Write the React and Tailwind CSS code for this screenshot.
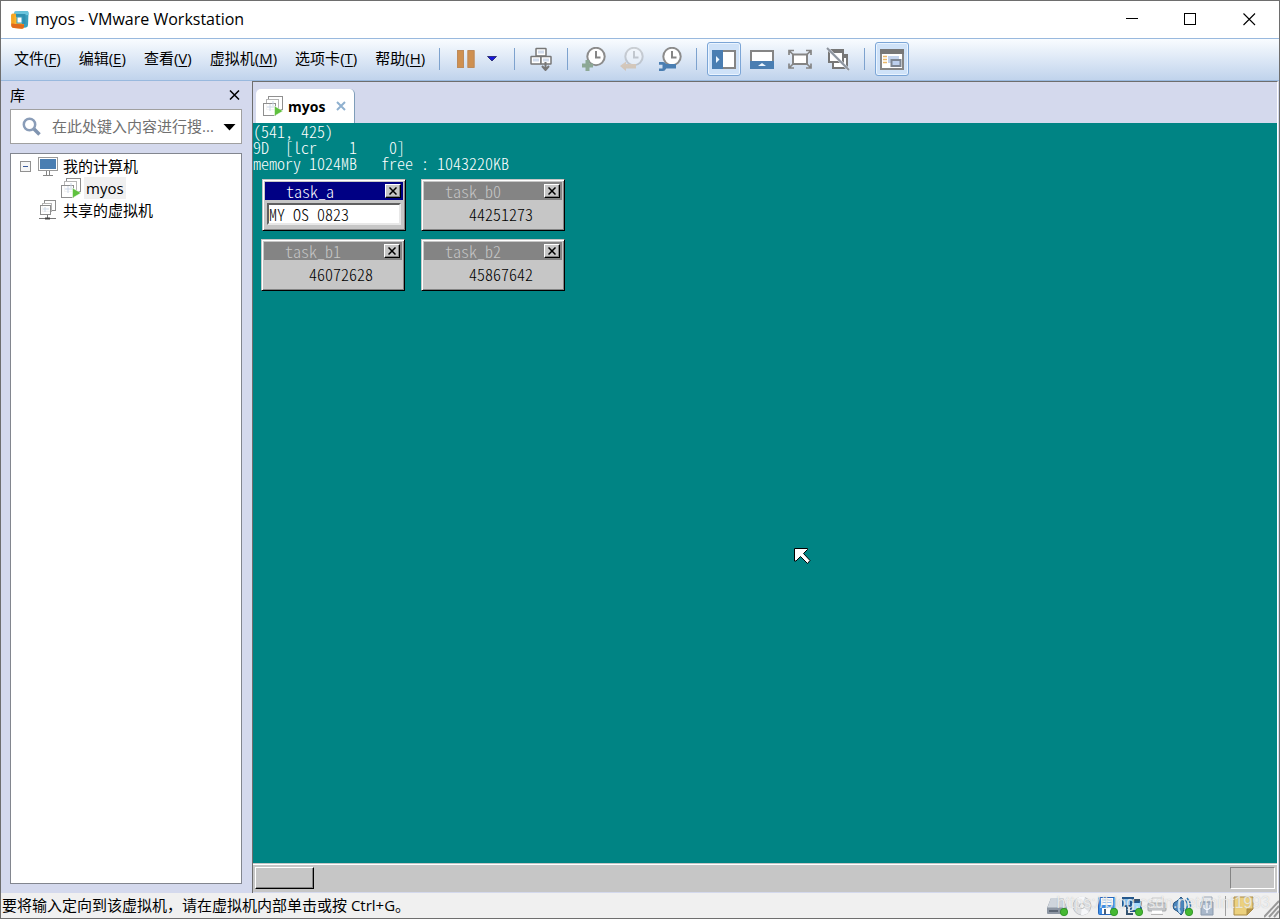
import React from "react";

const menus = [
  ["文件", "F"],
  ["编辑", "E"],
  ["查看", "V"],
  ["虚拟机", "M"],
  ["选项卡", "T"],
  ["帮助", "H"],
];

function Svg({ children, w = 24, h = 24, className = "" }) {
  return (
    <svg width={w} height={h} viewBox={`0 0 ${w} ${h}`} fill="none" aria-hidden="true" className={`block shrink-0 ${className}`}>
      {children}
    </svg>
  );
}

function Logo() {
  return (
    <Svg w={20} h={20}>
      <path d="M5 1.500 16.500 1Q18.500 1 18.500 3L18 15Q18 17 16 17.500L12 18V5L4 4z" fill="#3a9fbd" />
      <path d="M4.500 1.500 17 1Q18.500 1 18.500 3v2L4 6z" fill="#68c3dc" />
      <path d="M3 3.500 12.500 4.500Q14 4.500 14 6.500v10Q14 18.700 12 18.700L4 18Q1.500 18 1.200 16L1 5.500Q1 3.500 3 3.500z" fill="#f5a623" />
      <path d="M1.300 13.500 14 14.500v2Q14 18.700 12 18.700L4 18Q1.500 18 1.300 15z" fill="#e06a1c" />
      <path d="M4.500 5.500h10V14h-10z" fill="#f9b631" />
      <path d="M6 4h9.500v10H12V7H6z" fill="#2e8fb0" />
      <rect x="7" y="7" width="5" height="6" fill="#fff" stroke="#3a9fbd" />
    </Svg>
  );
}

function Clock({ faded, children }) {
  return (
    <Svg>
      <g opacity={faded ? 0.35 : 1}>
        <circle cx="14" cy="9.500" r="8.700" fill="#fff" stroke="#8c8c8c" strokeWidth="2" />
        <path d="M14 4v6.500h4.500" stroke="#858585" strokeWidth="2" />
        {children}
      </g>
    </Svg>
  );
}

function VmIcon({ running }) {
  return (
    <Svg w={20} h={20}>
      <rect x="5.500" y="0.500" width="14" height="13" fill="#fff" stroke="#8f8f8f" />
      <rect x="3.500" y="3.500" width="12" height="10" fill="#fff" stroke="#b5b5b5" />
      <rect x="0.500" y="7.500" width="12" height="12" fill="#fff" fillOpacity="0.850" stroke="#8f8f8f" />
      <path d="M7 8v7M4 11h9M10 5v5" stroke="#ccd7e6" />
      {running && <path d="M11.500 10v10l8.500-5z" fill="#5fc13e" stroke="#fff" strokeWidth="0.500" />}
    </Svg>
  );
}

function SharedIcon() {
  return (
    <Svg w={18} h={20}>
      <rect x="5.500" y="0.500" width="11" height="10" fill="#fff" stroke="#8f8f8f" />
      <rect x="3.500" y="3.500" width="9" height="8" fill="#fff" stroke="#b5b5b5" />
      <rect x="1.500" y="5.500" width="10" height="9" fill="#fff" fillOpacity="0.850" stroke="#8f8f8f" />
      <path d="M6 7v5M4 9h6" stroke="#ccd7e6" />
      <path d="M8.500 15v3M0 18.500h6M11 18.500h6" stroke="#777" />
      <path d="M6 18.500h5" stroke="#444" strokeWidth="2" />
    </Svg>
  );
}

function Separator({ className }) {
  return <span className={`h-[22px] w-px shrink-0 bg-[#7da2ce] ${className}`} />;
}

function ToolButton({ label, children, active, className = "" }) {
  return (
    <button
      aria-label={label}
      className={`flex size-[34px] shrink-0 items-center justify-center rounded-[3px] ${
        active ? "border border-[#7ba5d6] bg-[#cfe2f8] shadow-[inset_0_0_0_1px_#eaf4ff]" : ""
      } ${className}`}
    >
      {children}
    </button>
  );
}

function Toolbar() {
  return (
    <div className="flex h-[43px] shrink-0 items-center overflow-hidden border-y border-[#99b9de] bg-linear-to-b from-[#f9fcff] to-[#c0d3ec] pb-px pl-[13px]">
      <nav className="flex shrink-0 gap-[18px] pb-[2px] text-[15px] leading-5">
        {menus.map(([name, key]) => (
          <button key={key} className="whitespace-nowrap">
            {name}(<u className="underline-offset-2">{key}</u>)
          </button>
        ))}
      </nav>
      <Separator className="mx-[14px]" />
      <button aria-label="暂停">
        <Svg>
          <path d="M3 3h7v18H3zM13.500 3h7v18h-7z" fill="#cf9050" />
          <path d="M3.500 3.500h6v17h-6zM14 3.500h6v17h-6z" stroke="#bd8a5b" />
        </Svg>
      </button>
      <button aria-label="电源选项" className="ml-[6px]">
        <Svg w={16} h={24}>
          <path d="M3.500 9.500h9L8 14z" fill="#1717dd" stroke="#10104f" strokeWidth="0.700" />
        </Svg>
      </button>
      <Separator className="mx-[14px]" />
      <button aria-label="发送 Ctrl+Alt+Del">
        <Svg>
          <g fill="#fff" stroke="#777" strokeWidth="1.500">
            <rect x="7" y="1.500" width="10" height="7.500" rx="0.500" />
            <rect x="2" y="9.500" width="10" height="7.500" rx="0.500" />
            <rect x="12" y="9.500" width="10" height="7.500" rx="0.500" />
          </g>
          <path d="M9 5h6M4 13h6M14 13h6" stroke="#d1dced" strokeWidth="3" />
          <path d="M16.500 15v7M13 19l3.500 4 3.500-4" stroke="#777" strokeWidth="2" />
        </Svg>
      </button>
      <Separator className="mx-[14px]" />
      <div className="flex shrink-0 gap-[14px]">
        <button aria-label="拍摄快照">
          <Clock><path d="M3.500 13h4v3.500H11v4H7.500V24h-4v-3.500H0v-4h3.500z" fill="#8ca895" /></Clock>
        </button>
        <button aria-label="恢复快照" disabled>
          <Clock faded><path d="M0 19l6-4.500V17h10v4.500H6V24z" fill="#d39855" /></Clock>
        </button>
        <button aria-label="管理快照">
          <Clock>
            <path d="M1 15h4q2 0 3.200 2H18v4.500H8.200Q7 24 5 24H1v-2.500h3.500v-3.800H1z" fill="#4a7eb2" />
          </Clock>
        </button>
      </div>
      <Separator className="ml-[14px] mr-[10px]" />
      <div className="flex shrink-0 gap-1">
        <ToolButton label="显示库" active>
          <Svg>
            <rect x="1" y="4" width="22" height="17" fill="#fff" stroke="#858585" strokeWidth="2" />
            <path d="M0 3h11v19H0z" fill="#4a7eb2" />
            <path d="M4 9l3.500 3.500L4 16z" fill="#eef7ff" />
          </Svg>
        </ToolButton>
        <ToolButton label="显示缩略图">
          <Svg>
            <rect x="1" y="4" width="22" height="17" fill="#fff" stroke="#858585" strokeWidth="2" />
            <path d="M0 14h24v8H0z" fill="#4a7eb2" />
            <path d="M8 19l4-3 4 3z" fill="#eef7ff" />
          </Svg>
        </ToolButton>
        <ToolButton label="全屏">
          <Svg>
            <rect x="5" y="7.500" width="14" height="9.500" fill="#fff" stroke="#858585" strokeWidth="2" />
            <path d="M1 8V3.500h5M18 3.500h5V8M1 16.500V21h5M18 21h5v-4.500M1 3.500l4 4M23 3.500l-4 4M1 21l4-4M23 21l-4-4" stroke="#858585" strokeWidth="1.700" />
          </Svg>
        </ToolButton>
        <ToolButton label="Unity">
          <Svg>
            <rect x="7" y="8" width="14" height="13" fill="#fff" stroke="#777" strokeWidth="2" />
            <path d="M6 7h16v4H6z" fill="#777" />
            <rect x="3" y="3" width="14" height="12" fill="#fff" stroke="#777" strokeWidth="2" />
            <path d="M2 2h16v4H2z" fill="#777" />
            <path d="M1 1l22 22" stroke="#e8edf5" strokeWidth="3" />
            <path d="M1 1l22 22" stroke="#8d949d" strokeWidth="2" />
          </Svg>
        </ToolButton>
      </div>
      <Separator className="ml-[9px] mr-[10px]" />
      <ToolButton label="控制台视图" active>
        <Svg>
          <rect x="1" y="3" width="22" height="19" fill="#fff" stroke="#858585" strokeWidth="2" />
          <path d="M0 2h24v5H0z" fill="#777" />
          <path d="M3 9.500h4M3 12.500h4M3 15.500h4" stroke="#e9b769" strokeWidth="1.500" />
          <path d="M8 9h11v7H8z" fill="#c3d3ed" />
          <rect x="11.500" y="13" width="9" height="6" fill="#bdd0ee" stroke="#7c8592" strokeWidth="2" />
        </Svg>
      </ToolButton>
    </div>
  );
}

function Sidebar() {
  return (
    <aside className="flex w-[251px] shrink-0 flex-col bg-[#d4d9ed] pb-[9px] pl-[9px] pr-[10px]">
      <div className="flex h-7 items-center justify-between pr-[2px] text-[15px]">
        <h2>库</h2>
        <button aria-label="关闭库">
          <Svg w={11} h={10}>
            <path d="M1 0.500l9 9M10 0.500l-9 9" stroke="#000" strokeWidth="1.500" />
          </Svg>
        </button>
      </div>
      <div className="flex h-[35px] shrink-0 items-center border border-[#a0a0a0] bg-white pl-[11px] pr-[5px]">
        <Svg w={20} h={20}>
          <circle cx="7.500" cy="7.500" r="5.700" stroke="#8a9db8" strokeWidth="2.500" />
          <path d="M12 12l5.500 5.500" stroke="#8094b0" strokeWidth="3.500" />
        </Svg>
        <input
          aria-label="搜索"
          placeholder="在此处键入内容进行搜..."
          className="ml-[10px] min-w-0 flex-1 bg-transparent text-[15px] outline-none placeholder:text-[#707070]"
        />
        <button aria-label="搜索选项">
          <Svg w={13} h={8}>
            <path d="M0.500 1h12l-6 6.500z" fill="#000" />
          </Svg>
        </button>
      </div>
      <ul className="mt-[9px] flex-1 border border-[#82868f] bg-white pl-[9px] pt-px text-[15px] leading-[22px]">
        <li>
          <div className="flex h-[22px] items-center">
            <button aria-label="折叠">
              <Svg w={11} h={11}>
                <rect x="0.500" y="0.500" width="10" height="10" fill="#f6f6f6" stroke="#919191" />
                <path d="M3 5.500h5" stroke="#3a5a9b" />
              </Svg>
            </button>
            <Svg w={20} h={20} className="ml-[7px]">
              <rect x="0.500" y="1.500" width="19" height="13" fill="#4a7eb2" stroke="#9a9a9a" />
              <rect x="1.500" y="2.500" width="17" height="11" stroke="#fff" />
              <path d="M8.500 15v4M11.500 15v4M5 19.500h10" stroke="#858585" />
            </Svg>
            <span className="ml-[5px]">我的计算机</span>
          </div>
          <ul>
            <li className="flex h-[22px] items-center pl-[41px]">
              <VmIcon running />
              <span className="ml-[3px] bg-[#f0f0f0] px-[2px]">myos</span>
            </li>
          </ul>
        </li>
        <li className="flex h-[22px] items-center pl-[19px]">
          <SharedIcon />
          <span className="ml-[6px]">共享的虚拟机</span>
        </li>
      </ul>
    </aside>
  );
}

function GuestWindow({ title, active, className, children }) {
  return (
    <section
      className={`absolute h-[52px] w-36 border-b border-l border-r border-t border-b-black border-l-[#c6c6c6] border-r-black border-t-[#c6c6c6] bg-[#c6c6c6] shadow-[inset_1px_1px_0_#fff,inset_-1px_-1px_0_#848484] ${className}`}
    >
      <header
        className={`mx-[2px] mt-[2px] flex h-[18px] items-center justify-between pl-[21px] pr-[2px] ${
          active ? "bg-[#000084] text-white" : "bg-[#848484] text-[#c6c6c6]"
        }`}
      >
        <span className="leading-4">{title}</span>
        <button
          aria-label={`关闭 ${title}`}
          className="flex h-[14px] w-4 items-center justify-center border border-b-black border-l-white border-r-black border-t-white bg-[#c6c6c6] shadow-[inset_-1px_-1px_0_#848484]"
        >
          <Svg w={8} h={8}>
            <path d="M0.500 0.500l7 7M7.500 0.500l-7 7" stroke="#000" strokeWidth="1.500" />
          </Svg>
        </button>
      </header>
      {children}
    </section>
  );
}

function Counter({ value }) {
  return <p className="mt-[6px] pr-[31px] text-right leading-4 text-black">{value}</p>;
}

function Guest() {
  return (
    <div className="relative flex flex-1 flex-col bg-[#008484] font-['Noto_Sans_CJK_JP',monospace] text-base font-light leading-4 text-white [font-feature-settings:'hwid']">
      <div>
        <p className="flex"><span className="w-12">(541,</span><span>425)</span></p>
        <p className="flex"><span className="w-8">9D</span><span className="w-16">[lcr</span><span className="w-10">1</span><span>0]</span></p>
        <p className="flex"><span className="w-14">memory</span><span className="w-18">1024MB</span><span className="w-10">free</span><span className="w-4">:</span><span>1043220KB</span></p>
      </div>
      <GuestWindow title="task_a" active className="left-[9px] top-14">
        <input
          aria-label="task_a"
          defaultValue="MY OS 0823"
          className="mx-1 mt-[3px] block h-[22px] w-[134px] border-2 border-b-[#e8e8e8] border-l-[#606060] border-r-[#e8e8e8] border-t-[#606060] bg-white text-black outline-none [font-feature-settings:'hwid']"
        />
      </GuestWindow>
      <GuestWindow title="task_b0" className="left-[168px] top-14"><Counter value="44251273" /></GuestWindow>
      <GuestWindow title="task_b1" className="left-2 top-[116px]"><Counter value="46072628" /></GuestWindow>
      <GuestWindow title="task_b2" className="left-[168px] top-[116px]"><Counter value="45867642" /></GuestWindow>
      <Svg w={17} h={17} className="absolute left-[541px] top-[425px]">
        <path d="M0.500 0.500h13v1l-4 4 6.500 7-2.500 3-7-7-4.500 4.500H0.500z" fill="#fff" stroke="#000" />
      </Svg>
      <div className="mt-auto flex h-[29px] items-center justify-between border-t border-[#c6c6c6] bg-[#c6c6c6] px-[2px] shadow-[inset_0_1px_0_#fff]">
        <button aria-label="开始" className="h-[22px] w-[59px] border border-b-black border-l-white border-r-black border-t-white shadow-[inset_-1px_-1px_0_#848484]" />
        <div className="h-[22px] w-[45px] border border-b-white border-l-[#848484] border-r-white border-t-[#848484]" />
      </div>
    </div>
  );
}

const Dot = () => <circle cx="17" cy="17" r="3.700" fill="#45b832" stroke="#278d20" strokeWidth="0.800" />;

function StatusBar() {
  return (
    <footer className="relative flex h-[25px] shrink-0 items-center justify-between bg-[#f0f0f0] pl-px text-[15px]">
      <p className="whitespace-nowrap">要将输入定向到该虚拟机，请在虚拟机内部单击或按 Ctrl+G。</p>
      <div className="flex shrink-0 items-center gap-[4px]">
        <Svg w={21} h={22}>
          <path d="M4 3h12l4 10v5q0 1-1 1H1q-1 0-1-1v-5z" fill="#8d96a3" />
          <path d="M4 3h12l3.500 9.500H0.500z" fill="#cfd5dc" />
          <path d="M2 16h9" stroke="#5c6674" strokeWidth="2" />
          <Dot />
        </Svg>
        <Svg w={21} h={22}>
          <circle cx="10" cy="11" r="9" fill="#dfe1e4" stroke="#c3c5c9" />
          <path d="M10 11L4 4q5-4 9-2zM10 11l7 6q-4 4-8 3z" fill="#f6f7f9" />
          <circle cx="10" cy="11" r="2.500" fill="#fff" stroke="#bbb" />
        </Svg>
        <Svg w={21} h={22}>
          <rect x="1.500" y="2.500" width="17" height="17" rx="1" fill="#3e8fe6" stroke="#2767bc" />
          <path d="M4 3h12v7H4zM5 13h9v6H5z" fill="#fff" />
          <path d="M5 5h10M5 7.500h10" stroke="#9cc5f2" />
          <path d="M7 14h2v5H7z" fill="#4a5e78" />
          <Dot />
        </Svg>
        <Svg w={21} h={22}>
          <rect x="1" y="3" width="10" height="8" fill="#85c4f3" stroke="#24578c" strokeWidth="2" />
          <rect x="9" y="7" width="10" height="9" fill="#a7dbff" stroke="#24578c" strokeWidth="2" />
          <path d="M5 12v7h6M11 5h7" stroke="#34536f" strokeWidth="2" />
          <Dot />
        </Svg>
        <Svg w={21} h={22}>
          <path d="M5 3h11v6H5z" fill="#f5f5f5" stroke="#c9c9c9" />
          <rect x="1" y="8" width="18" height="8" rx="1" fill="#c3c5c8" stroke="#a5a8ab" />
          <path d="M4 12h12" stroke="#fff" strokeWidth="1" />
          <path d="M5 17h10" stroke="#fff" strokeWidth="3" />
          <path d="M4 19.500h12" stroke="#b6b6b6" />
        </Svg>
        <Svg w={21} h={22}>
          <path d="M1 11Q1 7 5 6l4-4q3 2 3 9t-3 9l-4-4Q1 15 1 11z" fill="#4a86bd" stroke="#2b5680" />
          <path d="M8 4q-3 7 0 14" stroke="#b9dcf8" strokeWidth="2" />
          <path d="M13 5q5 5 0 11M15 3q7 8 0 15" stroke="#2875b2" strokeWidth="1.500" />
          <Dot />
        </Svg>
        <Svg w={21} h={22}>
          <path d="M6 2h9v5H6z" fill="#e9edf2" stroke="#9da8b6" />
          <path d="M4 7h12v13H4z" fill="#a9b8ca" stroke="#8a9aad" />
          <path d="M10 18V8M7 10v3l3 2 3-2v-3" stroke="#f4f8ff" strokeWidth="1.300" />
        </Svg>
        <span className="mx-[3px] h-5 w-px bg-[#a0a0a0]" />
        <Svg w={21} h={22}>
          <path d="M1 2h19v12l-6 6H1z" fill="#ecd17e" stroke="#a98b46" />
          <path d="M14 20v-6h6z" fill="#b9984c" stroke="#a98b46" />
        </Svg>
        <Svg w={15} h={25} className="ml-[6px]">
          <path d="M0 24L15 8M5 24L15 13M10 24L15 18" stroke="#999" strokeWidth="2" />
        </Svg>
      </div>
      <span className="pointer-events-none absolute right-[9px] top-0 whitespace-nowrap font-['Liberation_Sans',sans-serif] text-base leading-5 text-white/70 [text-shadow:0_0_1px_#88888880]">
        https://blog.csdn.net/mint1993
      </span>
    </footer>
  );
}

export default function App() {
  return (
    <div className="flex min-h-screen flex-col border border-[#6e6e6e] bg-[#d4d9ed] font-['Open_Sans','Noto_Sans_CJK_SC',sans-serif] text-black">
      <header className="flex h-[37px] shrink-0 items-center bg-white pl-[9px]">
        <Logo />
        <h1 className="ml-[5px] flex-1 pb-px text-base">myos - VMware Workstation</h1>
        <button aria-label="最小化" className="flex h-full w-[58px] items-center justify-center">
          <Svg w={13} h={13}><path d="M0 5.500h12" stroke="#000" /></Svg>
        </button>
        <button aria-label="最大化" className="flex h-full w-[58px] items-center justify-center">
          <Svg w={13} h={13}><rect x="0.500" y="0.500" width="11" height="11" stroke="#000" /></Svg>
        </button>
        <button aria-label="关闭" className="flex h-full w-[60px] items-center justify-center">
          <Svg w={13} h={13}><path d="M0.500 0.500l11.500 11.500M12 0.500L0.500 12" stroke="#000" strokeWidth="1.100" /></Svg>
        </button>
      </header>
      <Toolbar />
      <div className="flex flex-1">
        <Sidebar />
        <main className="mr-px flex min-w-0 flex-1 flex-col border-l border-r border-t border-l-[#6e6e6e] border-r-white border-t-[#6e6e6e] pb-px">
          <div className="flex h-[41px] shrink-0 items-end pl-[3px]">
            <div className="flex h-[34px] items-center rounded-t-[5px] border-r border-[#7f9db9] bg-white pl-[7px] pr-2">
              <VmIcon running />
              <button className="ml-[5px] text-[14px] font-bold">myos</button>
              <button aria-label="关闭选项卡" className="ml-[11px]">
                <Svg w={10} h={10}><path d="M1 1l8 8M9 1l-8 8" stroke="#8fb0cf" strokeWidth="2" /></Svg>
              </button>
            </div>
          </div>
          <Guest />
        </main>
      </div>
      <StatusBar />
    </div>
  );
}
